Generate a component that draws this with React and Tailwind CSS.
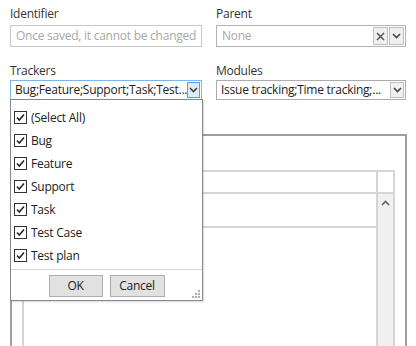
import React from "react";

const Chevron = ({ className = "" }) => (
  <svg width="9" height="6" viewBox="0 0 9 6" className={className}>
    <path d="M1 1 L4.5 4.5 L8 1" fill="none" stroke="#444" strokeWidth="1.6" />
  </svg>
);

const Check = () => (
  <span className="w-[13px] h-[13px] border border-[#333] bg-white flex items-center justify-center shrink-0">
    <svg width="11" height="11" viewBox="0 0 11 11">
      <path d="M2 5.5 L4.3 8 L9 2.5" fill="none" stroke="#222" strokeWidth="1.5" />
    </svg>
  </span>
);

const items = ["(Select All)", "Bug", "Feature", "Support", "Task", "Test Case", "Test plan"];

export default function App() {
  return (
    <div
      className="relative w-[416px] h-[346px] bg-white overflow-hidden text-[#222] tracking-[-0.25px]"
      style={{ fontFamily: '"Open Sans", "Noto Sans", sans-serif' }}
    >
      <div className="pl-[10px] pt-[6px] grid grid-cols-[192px_190px] gap-x-[14px]">
        <div className="flex flex-col">
          <div className="text-[12px] leading-[16px] h-[16px] text-[#333]">Identifier</div>
          <div className="mt-[3px] h-[22px] border border-[#c8c8c8] flex items-center px-[5px] text-[12px] text-[#a8a8a8] whitespace-nowrap">
            Once saved, it cannot be changed
          </div>
        </div>
        <div className="flex flex-col">
          <div className="text-[12px] leading-[16px] h-[16px] text-[#333]">Parent</div>
          <div className="mt-[3px] h-[22px] border border-[#b4b4b4] flex items-center pl-[5px] pr-[1px] text-[12px] text-[#a8a8a8]">
            <span className="flex-1">None</span>
            <span className="w-[15px] h-[18px] border border-[#c0c0c0] bg-[#efefef] flex items-center justify-center">
              <svg width="9" height="9" viewBox="0 0 9 9">
                <path d="M1 1 L8 8 M8 1 L1 8" stroke="#555" strokeWidth="1.5" />
              </svg>
            </span>
            <span className="ml-[1px] w-[15px] h-[18px] border border-[#c0c0c0] bg-[#efefef] flex items-center justify-center">
              <Chevron />
            </span>
          </div>
        </div>
        <div className="flex flex-col mt-[16px]">
          <div className="text-[12px] leading-[16px] h-[16px] text-[#333]">Trackers</div>
          <div className="mt-[1px] h-[20px] border border-[#7eb4ea] flex items-center pl-[4px] pr-[1px] text-[12px] text-[#222]">
            <span className="flex-1 whitespace-nowrap">Bug;Feature;Support;Task;Test...</span>
            <span className="w-[13px] h-[16px] border border-[#569de5] bg-[#dcecfc] flex items-center justify-center">
              <Chevron />
            </span>
          </div>
        </div>
        <div className="flex flex-col mt-[16px]">
          <div className="text-[12px] leading-[16px] h-[16px] text-[#333]">Modules</div>
          <div className="mt-[1px] h-[20px] border border-[#acacac] flex items-center pl-[4px] pr-[1px] text-[12px] text-[#222]">
            <span className="flex-1 whitespace-nowrap">Issue tracking;Time tracking;...</span>
            <span className="w-[14px] h-[16px] border border-[#c0c0c0] bg-[#f0f0f0] flex items-center justify-center">
              <Chevron />
            </span>
          </div>
        </div>
      </div>

      {/* group box behind */}
      <div className="ml-[10px] mt-[34px] w-[397px] h-[240px] border-t-2 border-l-2 border-r-2 border-[#a0a0a0] pt-[34px] pl-[10px]">
        <div className="w-[373px] h-[200px] border-t-2 border-l-2 border-r-2 border-[#d5d5d5] flex">
          <div className="flex-1 flex flex-col">
            <div className="h-[22px] border-b-2 border-[#d5d5d5]" />
            <div className="h-[34px] border-b-2 border-[#d5d5d5]" />
          </div>
          <div className="w-[17px] border-l-2 border-[#d5d5d5] flex flex-col">
            <div className="h-[22px] border-b-2 border-[#d5d5d5] bg-white" />
            <div className="flex-1 bg-[#f0f0f0] flex justify-center pt-[6px]">
              <svg width="9" height="6" viewBox="0 0 9 6">
                <path d="M1 5 L4.5 1.5 L8 5" fill="none" stroke="#606060" strokeWidth="1.6" />
              </svg>
            </div>
          </div>
        </div>
      </div>

      {/* dropdown popup */}
      <div className="absolute left-[10px] top-[99px] w-[193px] h-[202px] bg-white border border-[#828790] flex flex-col shadow-[1px_1px_2px_rgba(0,0,0,0.15)]">
        <div className="flex flex-col pt-[6px] pl-[3px]">
          {items.map((t) => (
            <div key={t} className="h-[23px] flex items-center gap-[4px] text-[12px] text-[#222]">
              <Check />
              <span>{t}</span>
            </div>
          ))}
        </div>
        <div className="mt-[2px] border-t border-[#d5d5d5] flex-1 relative flex justify-center gap-[7px] pt-[5px]">
          <button className="w-[54px] h-[22px] border border-[#adadad] bg-[#e1e1e1] text-[12px] text-[#222]">OK</button>
          <button className="w-[55px] h-[22px] border border-[#adadad] bg-[#e1e1e1] text-[12px] text-[#222]">Cancel</button>
          <svg className="absolute right-[2px] bottom-[2px]" width="8" height="8" viewBox="0 0 8 8">
            <rect x="6" y="0" width="2" height="2" fill="#b0b0b0" />
            <rect x="3" y="3" width="2" height="2" fill="#b0b0b0" />
            <rect x="6" y="3" width="2" height="2" fill="#b0b0b0" />
            <rect x="0" y="6" width="2" height="2" fill="#b0b0b0" />
            <rect x="3" y="6" width="2" height="2" fill="#b0b0b0" />
            <rect x="6" y="6" width="2" height="2" fill="#b0b0b0" />
          </svg>
        </div>
      </div>
    </div>
  );
}
